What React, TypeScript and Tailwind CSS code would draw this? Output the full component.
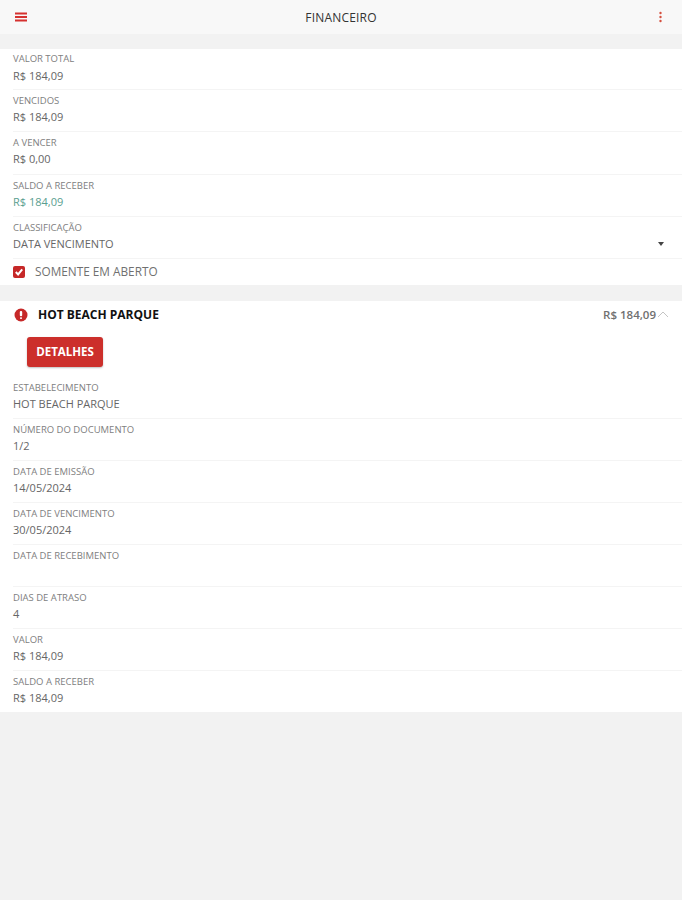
import React from "react";

const font = { fontFamily: '"Open Sans", sans-serif' };

function Row({ label, value, valueClass = "text-[#666666]", last = false, h = "h-[42px]", top = "pt-[3px]" }: { label: string; value: string; valueClass?: string; last?: boolean; h?: string; top?: string }) {
  return (
    <div className={`${h} flex flex-col ${last ? "" : "border-b border-[#f4f4f4]"}`}>
      <div className={`h-[18px] ${top} text-[9.5px] leading-[15px] text-[#808080]`}>{label}</div>
      <div className="h-[17px] text-[11px] leading-[17px]">
        <span className={valueClass}>{value}</span>
      </div>
    </div>
  );
}

export default function App() {
  return (
    <div className="min-h-[900px] bg-[#f2f2f2]" style={font}>
      <header className="h-[34px] bg-[#f8f8f8] flex items-center justify-between pl-[15px] pr-[20px]">
        <svg width="12" height="10" viewBox="0 0 12 10" className="shrink-0">
          <rect x="0" y="0.5" width="12" height="2" fill="#d5312f" />
          <rect x="0" y="4" width="12" height="2" fill="#d5312f" />
          <rect x="0" y="7.5" width="12" height="2" fill="#d5312f" />
        </svg>
        <div className="pt-[1px] pr-[4px] text-[12px] tracking-[0.2px] font-medium text-[#333333]">FINANCEIRO</div>
        <svg width="3" height="12" viewBox="0 0 3 12" className="shrink-0">
          <circle cx="1.5" cy="2" r="1.2" fill="#d5503f" />
          <circle cx="1.5" cy="6" r="1.2" fill="#d5503f" />
          <circle cx="1.5" cy="10" r="1.2" fill="#d5503f" />
        </svg>
      </header>

      <section className="mt-[15px] bg-white pl-[13px]">
        <Row label="VALOR TOTAL" value="R$ 184,09" h="h-[41px]" top="pt-[2px]" />
        <Row label="VENCIDOS" value="R$ 184,09" />
        <Row label="A VENCER" value="R$ 0,00" h="h-[43px]" />
        <Row label="SALDO A RECEBER" value="R$ 184,09" valueClass="text-[#5a9e90]" />
        <div className="h-[42px] border-b border-[#f4f4f4] relative">
          <div className="h-[18px] pt-[3px] text-[9.5px] leading-[15px] text-[#808080]">CLASSIFICAÇÃO</div>
          <div className="h-[17px] text-[11px] leading-[17px] text-[#666666]">DATA VENCIMENTO</div>
          <div className="absolute right-[18px] top-[25px] w-0 h-0 border-l-[3.5px] border-r-[3.5px] border-t-[4px] border-l-transparent border-r-transparent border-t-[#444444]" />
        </div>
        <div className="h-[26px] flex items-center gap-[10px]">
          <span className="w-[12px] h-[12px] rounded-[2px] bg-[#c62828] flex items-center justify-center">
            <svg width="10" height="10" viewBox="0 0 10 10" fill="none">
              <path d="M1.8 5 L4.1 7.4 L8.2 2.4" stroke="#ffffff" strokeWidth="2" />
            </svg>
          </span>
          <span className="text-[11.8px] text-[#707070]">SOMENTE EM ABERTO</span>
        </div>
      </section>

      <section className="mt-[16px] bg-white h-[411px]">
        <div className="h-[27px] flex items-center pl-[14px] pr-[13px]">
          <svg width="14" height="14" viewBox="0 0 14 14" className="shrink-0">
            <circle cx="7" cy="7" r="6.5" fill="#c62828" />
            <rect x="5.8" y="3" width="2.4" height="5.2" rx="1" fill="#ffffff" />
            <rect x="6" y="9.2" width="2" height="1.8" rx="0.8" fill="#ffffff" />
          </svg>
          <span className="ml-[10px] text-[12px] font-bold text-[#111111]">HOT BEACH PARQUE</span>
          <span className="ml-auto text-[11.5px] font-semibold text-[#707070]">R$ 184,09</span>
          <svg width="12" height="7" viewBox="0 0 12 7" fill="none" className="ml-[1px] shrink-0">
            <path d="M1 6 L6 1 L11 6" stroke="#c4c4c4" strokeWidth="1" />
          </svg>
        </div>
        <div className="pl-[27px] pt-[9px]">
          <button className="w-[76px] h-[30px] rounded-[3px] bg-[#cc2f2b] text-white text-[11.5px] font-bold shadow-[0_1px_2px_rgba(0,0,0,0.25)]">DETALHES</button>
        </div>
        <div className="pl-[13px] pt-[10px]">
          <Row label="ESTABELECIMENTO" value="HOT BEACH PARQUE" />
          <Row label="NÚMERO DO DOCUMENTO" value="1/2" />
          <Row label="DATA DE EMISSÃO" value="14/05/2024" />
          <Row label="DATA DE VENCIMENTO" value="30/05/2024" />
          <Row label="DATA DE RECEBIMENTO" value="" />
          <Row label="DIAS DE ATRASO" value="4" />
          <Row label="VALOR" value="R$ 184,09" />
          <Row label="SALDO A RECEBER" value="R$ 184,09" last />
        </div>
      </section>
    </div>
  );
}
